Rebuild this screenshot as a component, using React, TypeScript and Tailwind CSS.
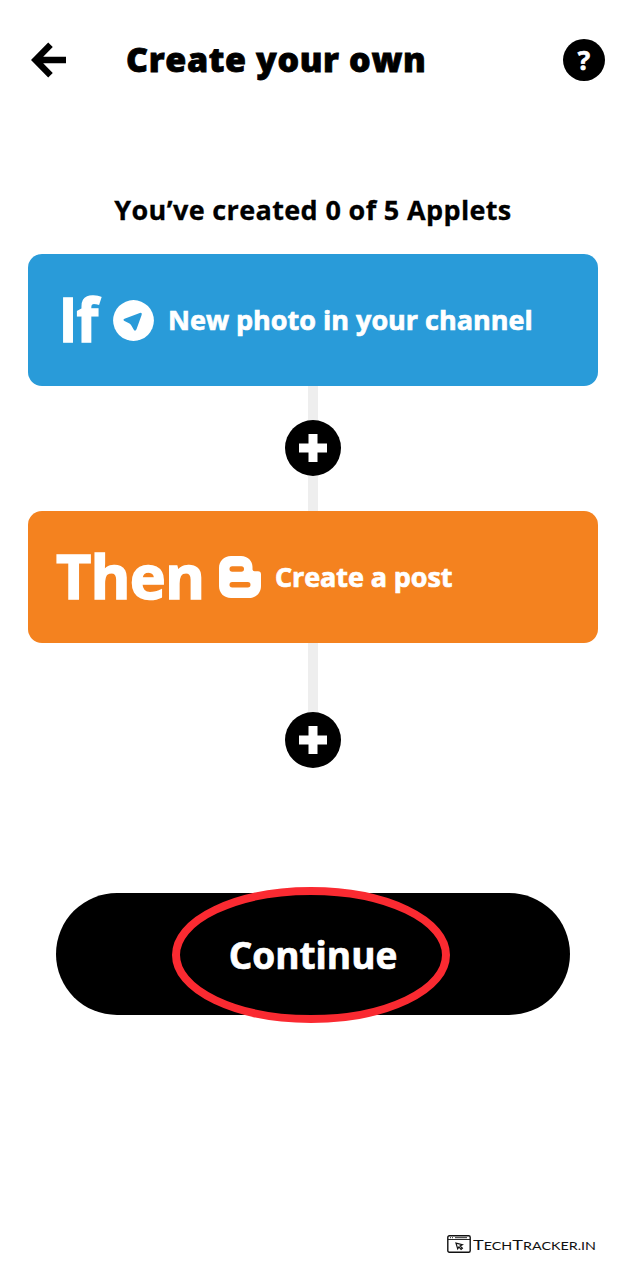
import React from "react";

function PlusButton() {
  return (
    <button
      aria-label="Add"
      className="relative flex h-14 w-14 shrink-0 items-center justify-center rounded-full bg-black"
    >
      <svg width="28" height="28" viewBox="0 0 28 28" fill="#fff">
        <path d="M9.500 0h9v9.500H28v9h-9.500V28h-9v-9.500H0v-9h9.500z" />
      </svg>
    </button>
  );
}

function TelegramIcon() {
  return (
    <svg className="shrink-0" width="41" height="41" viewBox="0 0 41 41">
      <circle cx="20.500" cy="20.500" r="20.400" fill="#fff" />
      <path
        d="M11.500 18.700 26.800 13Q29.300 12.300 28.700 14.700L23.500 29.300Q22.200 31.800 20.800 29.700L18.500 25.700Q17.800 24.300 16.500 23.500L11.500 21Q9.500 19.700 11.500 18.700Z"
        fill="#299bd9"
      />
    </svg>
  );
}

function BloggerIcon() {
  return (
    <svg className="shrink-0" width="42" height="42" viewBox="0 0 42 42">
      <path
        d="M12 0H22C29 0 33.500 5 33.500 11V13.500Q33.700 15.300 35.500 15.300H39Q42 15.300 42 18.500V30C42 37 37 42 30 42H12C5 42 0 37 0 30V12C0 5 5 0 12 0Z"
        fill="#fff"
      />
      <rect x="10.500" y="10.300" width="14.500" height="5.400" rx="2.700" fill="#f4821f" />
      <rect x="10.500" y="26" width="21" height="5.400" rx="2.700" fill="#f4821f" />
    </svg>
  );
}

function BrowserIcon() {
  return (
    <svg className="shrink-0" width="24" height="18" viewBox="0 0 24 18" fill="none" stroke="#111">
      <rect x="0.800" y="0.800" width="22.400" height="16.400" rx="1.500" strokeWidth="1.400" />
      <path d="M1 4.500h22" strokeWidth="0.900" />
      <path d="M3 2.700h1M5 2.700h1M8 2.700h12" strokeWidth="0.900" />
      <path d="M9 8.200l6.300 1.500-2.200 1.200 2.300 2.400-1.300 1.100-2.200-2.500-1.200 1.900z" strokeWidth="1.200" />
    </svg>
  );
}

export default function App() {
  return (
    <main className="flex h-[1280px] w-[626px] flex-col overflow-hidden bg-white font-['Open_Sans',sans-serif] text-black">
      <header className="flex h-[120px] shrink-0 items-center pr-[21px] pl-[31px]">
        <svg className="shrink-0" width="35" height="36" viewBox="0 0 35 36" fill="none" stroke="#000" strokeWidth="6.400">
          <path d="M19.500 2.800 4.500 18l15 15.200M4.500 18H35" />
        </svg>
        <h1 className="ml-[60px] pb-[2px] text-[34px] leading-[44px] font-extrabold tracking-[0.62px] whitespace-nowrap [-webkit-text-stroke:0.8px_#000]">
          Create your own
        </h1>
        <div className="ml-auto flex h-[42px] w-[42px] shrink-0 items-center justify-center rounded-full bg-black pb-[1px] text-[26px] leading-none font-bold text-white [-webkit-text-stroke:0.7px_#fff]">
          ?
        </div>
      </header>
      <p className="mt-[70px] h-[40px] text-center text-[27px] leading-[40px] font-bold tracking-[0.36px] whitespace-nowrap [-webkit-text-stroke:0.3px_#000]">
        You’ve created 0 of 5 Applets
      </p>
      <section className="mx-7 mt-[24px] flex flex-col items-center">
        <div className="flex h-[132px] w-full items-center rounded-[14px] bg-[#299bd9] pl-[28px] text-white">
          <span className="w-[57px] origin-left scale-x-[0.92] pb-[3px] pl-[3px] text-[61px] leading-[80px] font-bold tracking-[-1px] [-webkit-text-stroke:1.500px_#fff]">
            If
          </span>
          <TelegramIcon />
          <span className="ml-[14px] text-[27px] font-bold whitespace-nowrap [-webkit-text-stroke:0.7px_#fff]">New photo in your channel</span>
        </div>
        <div className="flex h-[125px] flex-col items-center">
          <div className="h-[34px] w-[10px] bg-[#eee]" />
          <PlusButton />
          <div className="h-[35px] w-[10px] bg-[#eee]" />
        </div>
        <div className="flex h-[132px] w-full items-center rounded-[14px] bg-[#f4821f] pl-[28px] text-white">
          <span className="w-[163px] pb-[2px] text-[61px] leading-[80px] font-bold tracking-[-0.8px] [-webkit-text-stroke:1.500px_#fff]">
            Then
          </span>
          <BloggerIcon />
          <span className="ml-[14px] text-[27px] font-bold tracking-[-0.1px] whitespace-nowrap [-webkit-text-stroke:0.7px_#fff]">
            Create a post
          </span>
        </div>
        <div className="h-[69px] w-[10px] bg-[#eee]" />
        <PlusButton />
      </section>
      <button className="relative mx-[56px] mt-[125px] flex h-[122px] shrink-0 items-center justify-center rounded-full bg-black pt-[2px] text-[37px] font-bold text-white [-webkit-text-stroke:0.7px_#fff]">
        Continue
        <svg className="absolute top-[-7px] left-[115px]" width="280" height="138" viewBox="0 0 280 138">
          <ellipse cx="140" cy="69" rx="135" ry="64" fill="none" stroke="#fa2a31" strokeWidth="8" />
        </svg>
      </button>
      <footer className="mt-auto mb-[26px] flex h-[20px] items-center gap-[2px] pl-[447px] font-['Lato',sans-serif] text-[#111]">
        <BrowserIcon />
        <span className="origin-left scale-x-[1.3] pt-[2px] text-[14px] leading-[20px] whitespace-nowrap">
          T<span className="text-[11px]">ECH</span>T<span className="text-[11px]">RACKER.IN</span>
        </span>
      </footer>
    </main>
  );
}
